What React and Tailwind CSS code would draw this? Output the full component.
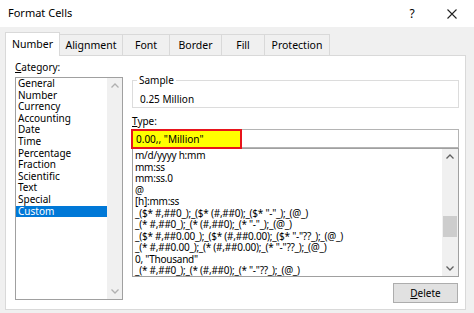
import React from "react";

const Chevron = ({ up, color = "#606060" }) => (
  <svg width="8" height="5" viewBox="0 0 8 5">
    <path
      d={up ? "M0.5 4.5 L4 1 L7.5 4.5" : "M0.5 0.5 L4 4 L7.5 0.5"}
      fill="none"
      stroke={color}
      strokeWidth="1.3"
    />
  </svg>
);

export default function App() {
  const cats = [
    "General",
    "Number",
    "Currency",
    "Accounting",
    "Date",
    "Time",
    "Percentage",
    "Fraction",
    "Scientific",
    "Text",
    "Special",
    "Custom",
  ];
  const types = [
    "m/d/yyyy h:mm",
    "mm:ss",
    "mm:ss.0",
    "@",
    "[h]:mm:ss",
    '_($* #,##0_);_($* (#,##0);_($* "-"_);_(@_)',
    '_(* #,##0_);_(* (#,##0);_(* "-"_);_(@_)',
    '_($* #,##0.00_);_($* (#,##0.00);_($* "-"??_);_(@_)',
    '_(* #,##0.00_);_(* (#,##0.00);_(* "-"??_);_(@_)',
    '0, "Thousand"',
    '_(* #,##0_);_(* (#,##0);_(* "-"??_);_(@_)',
  ];
  const tabs = [
    ["Alignment", "w-[63px]"],
    ["Font", "w-[47px]"],
    ["Border", "w-[52px]"],
    ["Fill", "w-[43px]"],
    ["Protection", "w-[65px]"],
  ];
  return (
    <div className="w-[474px] h-[313px] bg-[#f0f0f0] overflow-hidden flex flex-col text-black font-['Noto_Sans',sans-serif] text-[10px]">
      {/* title bar */}
      <div className="h-[27px] bg-white flex items-center shrink-0">
        <span className="ml-[8px] text-[11px]">Format Cells</span>
        <span className="ml-auto w-[10px] text-center text-[12px]">?</span>
        <span className="ml-[30px] mr-[17px] w-[10px] h-[10px] flex">
          <svg width="10" height="10" viewBox="0 0 10 10">
            <path d="M0.5 0.5 L9.5 9.5 M9.5 0.5 L0.5 9.5" stroke="#222" strokeWidth="1.1" />
          </svg>
        </span>
      </div>

      {/* tabs */}
      <div className="flex items-end pl-[5px] mt-[5px] -mb-px relative z-10 shrink-0">
        <div className="w-[55px] h-[24px] bg-white border border-b-0 border-[#d9d9d9] flex items-center justify-center text-[10.5px]">
          Number
        </div>
        {tabs.map(([t, w]) => (
          <div
            key={t}
            className={`${w} h-[22px] border-t border-r border-[#d9d9d9] flex items-center justify-center text-[10.5px]`}
          >
            {t}
          </div>
        ))}
      </div>

      {/* panel */}
      <div className="ml-[5px] w-[461px] h-[255px] bg-white border border-[#d9d9d9] flex pl-[9px] pt-[5px] gap-[9px] shrink-0">
        {/* category column */}
        <div className="w-[108px] flex flex-col">
          <div className="h-[12px] leading-[12px]">
            <span className="underline">C</span>ategory:
          </div>
          <div className="mt-[4px] h-[223px] border border-[#a0a0a0] flex">
            <div className="flex-1 flex flex-col">
              {cats.map((c) => (
                <div
                  key={c}
                  className={`h-[11.6px] leading-[11.6px] pl-[2px] ${
                    c === "Custom" ? "bg-[#0078d7] text-white" : ""
                  }`}
                >
                  {c}
                </div>
              ))}
            </div>
            <div className="w-[15px] bg-[#f0f0f0] flex flex-col items-center justify-between py-[5px]">
              <Chevron up color="#b0b0b0" />
              <Chevron color="#b0b0b0" />
            </div>
          </div>
        </div>

        {/* right column */}
        <div className="w-[327px] flex flex-col">
          <div className="mt-[19px] h-[28px] border border-[#dcdcdc] relative pl-[7px] pt-[12px] leading-[12px]">
            <span className="absolute left-[4px] top-[-7px] bg-white px-[2px] leading-[12px]">Sample</span>
            0.25 Million
          </div>
          <div className="mt-[7px] h-[12px] leading-[12px]">
            <span className="underline">T</span>ype:
          </div>
          <div className="mt-[2px] h-[19px] border border-[#b4b4b4] relative shrink-0">
            <div className="absolute left-[-2px] top-[-1px] w-[111px] h-[20px] bg-[#ffff00] border-2 border-[#e8141b] flex items-center pl-[3px] leading-[12px]">
              0.00,, "Million"
            </div>
          </div>
          <div className="h-[129px] border border-[#a0a0a0] flex shrink-0">
            <div className="flex-1 flex flex-col overflow-hidden pt-[1px] pl-[2px] whitespace-nowrap tracking-[-0.25px]">
              {types.map((t, i) => (
                <div key={i} className="h-[11.5px] leading-[11.5px] shrink-0">
                  {t}
                </div>
              ))}
            </div>
            <div className="w-[16px] bg-[#f0f0f0] flex flex-col items-center">
              <div className="h-[15px] flex items-center">
                <Chevron up />
              </div>
              <div className="mt-[52px] w-[14px] h-[21px] bg-[#cdcdcd]" />
              <div className="mt-auto h-[15px] flex items-center">
                <Chevron />
              </div>
            </div>
          </div>
          <div className="mt-[6px] self-end mr-[1px] w-[65px] h-[20px] bg-[#e1e1e1] border border-[#adadad] flex items-center justify-center">
            <span className="underline">D</span>elete
          </div>
        </div>
      </div>
    </div>
  );
}
